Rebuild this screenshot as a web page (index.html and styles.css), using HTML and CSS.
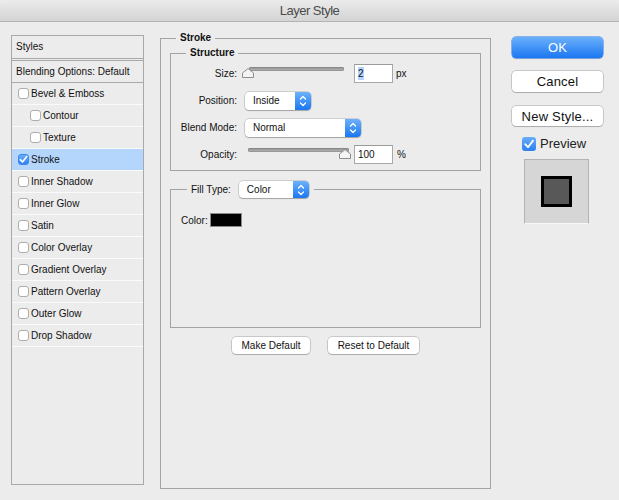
FILE: index.html
```html
<!DOCTYPE html>
<html>
<head>
<meta charset="utf-8">
<title>Layer Style</title>
<link rel="stylesheet" href="styles.css">
</head>
<body>
<div class="window">
  <div class="titlebar">Layer Style</div>
  <div class="content">
    <div class="sidebar">
      <div class="side-head">Styles</div>
      <div class="side-blend">Blending Options: Default</div>
      <div class="side-row"><span class="cb"></span>Bevel &amp; Emboss</div>
      <div class="side-row sub"><span class="cb"></span>Contour</div>
      <div class="side-row sub"><span class="cb"></span>Texture</div>
      <div class="side-row selected"><span class="cb checked"><svg viewBox="0 0 11 11" width="11" height="11"><path d="M2.3 5.6 L4.5 8 L8.8 2.6" fill="none" stroke="#fff" stroke-width="1.6" stroke-linecap="round" stroke-linejoin="round"/></svg></span>Stroke</div>
      <div class="side-row"><span class="cb"></span>Inner Shadow</div>
      <div class="side-row"><span class="cb"></span>Inner Glow</div>
      <div class="side-row"><span class="cb"></span>Satin</div>
      <div class="side-row"><span class="cb"></span>Color Overlay</div>
      <div class="side-row"><span class="cb"></span>Gradient Overlay</div>
      <div class="side-row"><span class="cb"></span>Pattern Overlay</div>
      <div class="side-row"><span class="cb"></span>Outer Glow</div>
      <div class="side-row"><span class="cb"></span>Drop Shadow</div>
    </div>

    <fieldset class="group outer">
      <legend class="legend-bold">Stroke</legend>
      <fieldset class="group structure">
        <legend class="legend-bold">Structure</legend>
        <div class="row">
          <span class="label">Size:</span>
          <div class="slider size-slider">
            <div class="track"></div>
            <svg class="thumb" viewBox="0 0 12 10" width="12" height="10"><path d="M0.5 9.5 V5 L6 0.6 L11.5 5 V9.5 Z" fill="#f4f4f4" stroke="#8c8c8c" stroke-width="1"/></svg>
          </div>
          <div class="numbox size-box"><span class="sel">2</span></div>
          <span class="unit">px</span>
        </div>
        <div class="row">
          <span class="label">Position:</span>
          <div class="dropdown pos-dd">
            <span class="dd-text">Inside</span>
            <span class="stepper"><svg viewBox="0 0 16 18" width="16" height="18"><path d="M5.5 7 L8 4.5 L10.5 7 M5.5 11 L8 13.5 L10.5 11" fill="none" stroke="#fff" stroke-width="1.3" stroke-linecap="round" stroke-linejoin="round"/></svg></span>
          </div>
        </div>
        <div class="row">
          <span class="label">Blend Mode:</span>
          <div class="dropdown blend-dd">
            <span class="dd-text">Normal</span>
            <span class="stepper"><svg viewBox="0 0 16 18" width="16" height="18"><path d="M5.5 7 L8 4.5 L10.5 7 M5.5 11 L8 13.5 L10.5 11" fill="none" stroke="#fff" stroke-width="1.3" stroke-linecap="round" stroke-linejoin="round"/></svg></span>
          </div>
        </div>
        <div class="row">
          <span class="label">Opacity:</span>
          <div class="slider opacity-slider">
            <div class="track"></div>
            <svg class="thumb" viewBox="0 0 12 10" width="12" height="10"><path d="M0.5 9.5 V5 L6 0.6 L11.5 5 V9.5 Z" fill="#f4f4f4" stroke="#8c8c8c" stroke-width="1"/></svg>
          </div>
          <div class="numbox opacity-box">100</div>
          <span class="unit pct">%</span>
        </div>
      </fieldset>

      <fieldset class="group fill">
        <legend class="fill-legend">
          <span class="fill-label">Fill Type:</span>
          <div class="dropdown fill-dd">
            <span class="dd-text">Color</span>
            <span class="stepper"><svg viewBox="0 0 16 18" width="16" height="18"><path d="M5.5 7 L8 4.5 L10.5 7 M5.5 11 L8 13.5 L10.5 11" fill="none" stroke="#fff" stroke-width="1.3" stroke-linecap="round" stroke-linejoin="round"/></svg></span>
          </div>
        </legend>
        <div class="fill-body">
          <div class="color-row"><span>Color:</span><span class="swatch"></span></div>
        </div>
      </fieldset>

      <div class="defaults">
        <button class="btn small">Make Default</button>
        <button class="btn small">Reset to Default</button>
      </div>
    </fieldset>

    <div class="actions">
      <button class="btn big primary">OK</button>
      <button class="btn big cancel">Cancel</button>
      <button class="btn big newstyle">New Style...</button>
      <div class="preview-check">
        <span class="pcb"><svg viewBox="0 0 14 14" width="14" height="14"><path d="M3.2 7.2 L6 10.2 L11 3.6" fill="none" stroke="#fff" stroke-width="1.8" stroke-linecap="round" stroke-linejoin="round"/></svg></span>
        <span>Preview</span>
      </div>
      <div class="preview-box"><div class="preview-square"></div></div>
    </div>
  </div>
</div>
</body>
</html>
```

FILE: styles.css
```css
* { box-sizing: border-box; }

html, body {
  margin: 0;
  padding: 0;
  background: #ececec;
}

body {
  font-family: "Liberation Sans", Arial, sans-serif;
  font-size: 10px;
  color: #111;
}

.window {
  width: 619px;
  height: 500px;
  overflow: hidden;
  background: #ececec;
}

.titlebar {
  height: 22px;
  line-height: 21px;
  text-align: center;
  font-size: 13px;
  letter-spacing: -0.5px;
  color: #4b4b4b;
  background: linear-gradient(#ebebeb, #d4d4d4);
  border-bottom: 1px solid #b3b3b3;
  border-radius: 5px 5px 0 0;
}

.content {
  display: flex;
  align-items: flex-start;
  padding-left: 11px;
}

/* ---------- sidebar ---------- */
.sidebar {
  margin-top: 13px;
  width: 133px;
  height: 450px;
  border: 1px solid #a9a9a9;
  background: #ececec;
}

.side-head {
  height: 25px;
  line-height: 21px;
  padding-left: 4px;
  border-bottom: 3px double #a9a9a9;
}

.side-blend {
  height: 22px;
  line-height: 21px;
  padding-left: 4px;
  border-bottom: 1px solid #a9a9a9;
}

.side-row {
  height: 22px;
  display: flex;
  align-items: center;
  padding-left: 6px;
  border-bottom: 1px solid #fafafa;
}

.side-row.sub { padding-left: 18px; }

.side-row.selected { background: #b4d6fd; }

.cb {
  width: 11px;
  height: 11px;
  margin-right: 2px;
  border: 1px solid #adadad;
  border-radius: 3px;
  background: #fff;
  flex: none;
  display: flex;
}

.cb.checked {
  border-color: #3b86ef;
  background: linear-gradient(#69aef9, #2f81f2);
}

.cb svg { margin: -1px; }

/* ---------- groups ---------- */
.group {
  margin: 0;
  border: 1px solid #a3a3a3;
  min-width: 0;
}

.legend-bold {
  font-weight: bold;
  line-height: 12px;
  padding: 0 4px;
}

.outer {
  margin-left: 16px;
  margin-top: 10px;
  width: 331px;
  height: 457px;
  padding: 3px 9px 0 9px;
}

.outer > .legend-bold { margin-left: 6px; }

.structure {
  padding: 5px 0 6px 0;
}

.structure > .legend-bold { margin-left: 15px; }

.row {
  display: flex;
  align-items: center;
  height: 19px;
  margin-bottom: 8px;
}

.row:last-child { margin-bottom: 0; }

.label {
  width: 66px;
  text-align: right;
  flex: none;
}

/* slider */
.slider {
  position: relative;
  height: 19px;
  flex: none;
}

.slider .track {
  position: absolute;
  top: 3px;
  height: 4px;
  border-radius: 2px;
  background: linear-gradient(#8d8d8d, #b9b9b9);
  box-shadow: inset 0 0 0 0.5px #7f7f7f;
}

.slider .thumb {
  position: absolute;
  top: 4px;
}

.size-slider { width: 102px; margin-left: 5px; }
.size-slider .track { left: 7px; right: 0; }
.size-slider .thumb { left: 0; }

.opacity-slider { width: 103px; margin-left: 11px; }
.opacity-slider .track { left: 0; right: 2px; }
.opacity-slider .thumb { right: 0; }

.numbox {
  width: 39px;
  height: 19px;
  background: #fff;
  border: 1px solid #a8a8a8;
  border-top-color: #9a9a9a;
  padding-left: 3px;
  line-height: 17px;
  font-size: 10px;
  flex: none;
}

.size-box { margin-left: 10px; }
.opacity-box { margin-left: 3px; }

.sel {
  background: #b3d5fe;
  padding: 1px 0;
}

.unit { margin-left: 3px; }
.unit.pct { margin-left: 4px; }

/* dropdown */
.dropdown {
  display: flex;
  align-items: center;
  height: 18px;
  background: #fff;
  border-radius: 4px;
  box-shadow: 0 0 0 0.5px rgba(0,0,0,0.25), 0 1px 1px rgba(0,0,0,0.2);
  flex: none;
  overflow: hidden;
}

.dd-text {
  flex: 1;
  padding-left: 8px;
  font-size: 10px;
}

.stepper {
  width: 16px;
  height: 18px;
  background: linear-gradient(#6cb2fb, #1b76f2);
  display: flex;
}

.pos-dd { width: 66px; margin-left: 8px; }
.blend-dd { width: 116px; margin-left: 8px; }

/* fill */
.fill {
  margin-top: 9px;
  padding: 0;
}

.fill-legend {
  display: flex;
  align-items: center;
  height: 18px;
  margin-left: 16px;
  padding: 0 5px 0 4px;
}

.fill-label { margin-right: 8px; }

.fill-dd { width: 70px; height: 17px; }
.fill-dd .stepper { height: 17px; }

.fill-body {
  height: 129px;
  padding: 15px 0 0 10px;
}

.color-row {
  display: flex;
  align-items: center;
}

.swatch {
  width: 32px;
  height: 14px;
  margin-left: 2px;
  background: #000;
  border: 1px solid #8a8a8a;
}

/* buttons */
.btn {
  font-family: "Liberation Sans", Arial, sans-serif;
  background: #fff;
  border: none;
  border-radius: 4px;
  box-shadow: 0 0 0 0.5px rgba(0,0,0,0.3), 0 1px 1px rgba(0,0,0,0.15);
  color: #111;
  padding: 0;
  margin: 0;
}

.defaults {
  display: flex;
  justify-content: center;
  gap: 18px;
  margin-top: 9px;
}

.btn.small {
  height: 17px;
  font-size: 10px;
  line-height: 17px;
}

.defaults .btn:first-child { width: 78px; }
.defaults .btn:last-child { width: 91px; }

.actions {
  display: flex;
  flex-direction: column;
  margin-left: 21px;
  margin-top: 15px;
}

.btn.big {
  width: 91px;
  height: 21px;
  font-size: 13px;
  letter-spacing: 0.2px;
}

.btn.primary {
  color: #fff;
  background: linear-gradient(#6ab0fb, #1c77f3);
  box-shadow: 0 0 0 0.5px #2a78e0, 0 1px 1px rgba(0,0,0,0.15);
}

.btn.cancel { margin-top: 13px; }

.btn.newstyle { margin-top: 14px; height: 20px; }

.preview-check {
  display: flex;
  align-items: center;
  margin-top: 10px;
  margin-left: 10px;
  font-size: 13px;
  color: #222;
  height: 15px;
}

.pcb {
  width: 14px;
  height: 14px;
  border-radius: 3px;
  background: linear-gradient(#69aef9, #2b7ff2);
  margin-right: 4px;
  display: flex;
}

.preview-box {
  margin-top: 8px;
  margin-left: 12px;
  width: 65px;
  height: 65px;
  background: #d6d6d6;
  border: 1px solid #b3b3b3;
  border-bottom-color: #f8f8f8;
  display: flex;
  align-items: center;
  justify-content: center;
}

.preview-square {
  width: 31px;
  height: 31px;
  border: 3px solid #000;
  background: #585858;
}
```
